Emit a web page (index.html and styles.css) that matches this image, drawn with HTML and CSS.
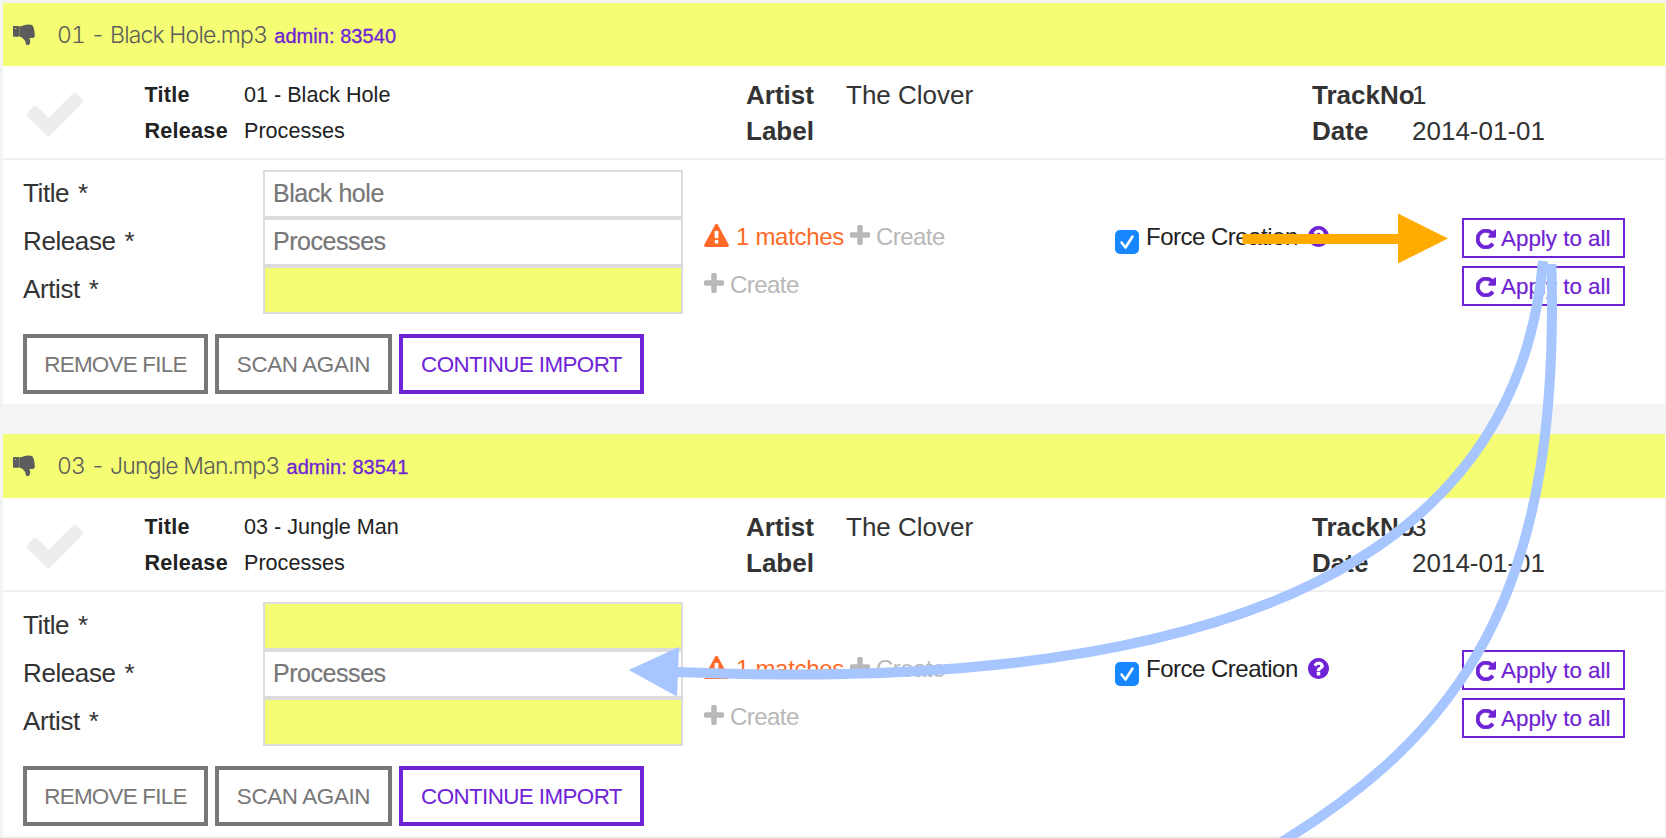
FILE: index.html
```html
<!DOCTYPE html>
<html lang="en">
<head>
<meta charset="utf-8">
<title>Import</title>
<link rel="stylesheet" href="styles.css">
</head>
<body>
<svg class="sprite" aria-hidden="true">
  <symbol id="plus" viewBox="192 128 1408 1408"><path d="M1600 736v192q0 40-28 68t-68 28h-416v416q0 40-28 68t-68 28h-192q-40 0-68-28t-28-68v-416h-416q-40 0-68-28t-28-68v-192q0-40 28-68t68-28h416v-416q0-40 28-68t68-28h192q40 0 68 28t28 68v416h416q40 0 68 28t28 68z"/></symbol>
  <symbol id="check" viewBox="121 310 1550 1212"><path d="M1671 566q0 40-28 68l-724 724-136 136q-28 28-68 28t-68-28l-136-136-362-362q-28-28-28-68t28-68l136-136q28-28 68-28t68 28l294 295 656-657q28-28 68-28t68 28l136 136q28 28 28 68z"/></symbol>
  <symbol id="help" viewBox="128 128 1536 1536"><path d="M1024 1376v-192q0-14-9-23t-23-9h-192q-14 0-23 9t-9 23v192q0 14 9 23t23 9h192q14 0 23-9t9-23zm256-672q0-88-55.500-163t-138.500-116-170-41q-243 0-371 213-15 24 8 42l132 100q7 6 19 6 16 0 25-12 53-68 86-92 34-24 86-24 48 0 85.500 26t37.500 59q0 38-20 61t-68 45q-63 28-115.500 86.500t-52.500 125.500v36q0 14 9 23t23 9h192q14 0 23-9t9-23q0-19 21.500-49.500t54.500-49.500q32-18 49-28.500t46-35 44.500-48 28-60.500 12.500-81zm384 192q0 209-103 385.500t-279.500 279.500-385.500 103-385.500-103-279.500-279.500-103-385.500 103-385.500 279.500-279.500 385.500-103 385.500 103 279.500 279.500 103 385.500z"/></symbol>
  <symbol id="warn" viewBox="0 0 1792 1664"><path d="M1024 1375v-190q0-14-9.500-23.500t-22.500-9.500h-192q-13 0-22.500 9.500t-9.500 23.500v190q0 14 9.500 23.500t22.500 9.500h192q13 0 22.500-9.500t9.500-23.500zm-2-374l18-459q0-12-10-19-13-11-24-11h-220q-11 0-24 11-10 7-10 21l17 457q0 10 10 16.500t24 6.500h185q14 0 23.500-6.500t10.500-16.500zm-14-934l768 1408q35 63-2 126-17 29-46.500 46t-63.500 17h-1536q-34 0-63.500-17t-46.500-46q-37-63-2-126l768-1408q17-31 47-49t65-18 65 18 47 49z"/></symbol>
  <symbol id="repeat" viewBox="128 128 1536 1536"><path d="M1664 256v448q0 26-19 45t-45 19h-448q-42 0-59-40-17-39 14-69l138-138q-148-137-349-137-104 0-198.500 40.500t-163.500 109.500-109.500 163.500-40.500 198.500 40.500 198.500 109.500 163.500 163.500 109.500 198.500 40.500q119 0 225-52t179-147q7-10 23-12 15 0 25 9l137 138q9 8 9.500 20.500t-7.500 22.500q-109 132-264 204.500t-327 72.500q-156 0-298-61t-245-164-164-245-61-298 61-298 164-245 245-164 298-61q147 0 284.500 55.500t244.500 156.500l130-129q29-31 70-14 39 17 39 59z"/></symbol>
  <symbol id="down" viewBox="0 0 22 22"><path fill-rule="evenodd" d="M.7 2H5.300q.7 0 .7.700V12q0 .8-.7.800H.7q-.7 0-.7-.8V2.700Q0 2 .7 2zM2.600 4a.5.500 0 1 0 .01 0z"/><path opacity=".8" d="M6 2.300h1.500v10.300H6z"/><path d="M7 2.200C9.500 2 12 .5 15.500.4c3 0 4.800.8 4.700 2.800 1 .8 1.100 2 .7 3 .9 1 1 2.100.5 3.100 1.100 2 .4 4.400-1.700 4.600h-3.300c1.300 2.600 1.200 7.200-1.900 7.200-2 0-1.500-2.300-2.400-4.100C11 15.500 9 12.800 7 12.700z"/></symbol>
</svg>

<main class="page">
  <section class="track">
    <header class="track-head first">
      <svg class="thumb"><use href="#down"/></svg>
      <span class="filename">01 - Black Hole.mp3</span>
      <a class="admin">admin: 83540</a>
    </header>
    <div class="info">
      <svg class="tick"><use href="#check"/></svg>
      <dl class="meta small"><dt>Title</dt><dd>01 - Black Hole</dd><dt>Release</dt><dd>Processes</dd></dl>
      <dl class="meta"><dt>Artist</dt><dd>The Clover</dd><dt>Label</dt><dd></dd></dl>
      <dl class="meta"><dt>TrackNo</dt><dd>1</dd><dt>Date</dt><dd>2014-01-01</dd></dl>
    </div>
    <div class="form">
      <div class="row">
        <label>Title *</label>
        <div class="field">Black hole</div>
      </div>
      <div class="row">
        <label>Release *</label>
        <div class="field">Processes</div>
        <div class="match"><span class="found"><svg class="i-warn"><use href="#warn"/></svg>1 matches</span><span class="create"><svg class="i-plus"><use href="#plus"/></svg>Create</span></div>
        <div class="force"><span class="box"><svg viewBox="0 0 24 24"><path d="M6.500 12.500l4 5L17.500 6.500"/></svg></span><span class="force-text">Force Creation</span><svg class="i-help"><use href="#help"/></svg></div>
        <button class="apply"><svg class="i-repeat"><use href="#repeat"/></svg>Apply to all</button>
      </div>
      <div class="row">
        <label>Artist *</label>
        <div class="field missing"></div>
        <div class="match"><span class="create"><svg class="i-plus"><use href="#plus"/></svg>Create</span></div>
        <div class="force"></div>
        <button class="apply"><svg class="i-repeat"><use href="#repeat"/></svg>Apply to all</button>
      </div>
      <div class="actions">
        <button class="btn remove">REMOVE FILE</button>
        <button class="btn scan">SCAN AGAIN</button>
        <button class="btn primary">CONTINUE IMPORT</button>
      </div>
    </div>
  </section>

  <section class="track">
    <header class="track-head">
      <svg class="thumb"><use href="#down"/></svg>
      <span class="filename">03 - Jungle Man.mp3</span>
      <a class="admin">admin: 83541</a>
    </header>
    <div class="info">
      <svg class="tick"><use href="#check"/></svg>
      <dl class="meta small"><dt>Title</dt><dd>03 - Jungle Man</dd><dt>Release</dt><dd>Processes</dd></dl>
      <dl class="meta"><dt>Artist</dt><dd>The Clover</dd><dt>Label</dt><dd></dd></dl>
      <dl class="meta"><dt>TrackNo</dt><dd>3</dd><dt>Date</dt><dd>2014-01-01</dd></dl>
    </div>
    <div class="form">
      <div class="row">
        <label>Title *</label>
        <div class="field missing"></div>
      </div>
      <div class="row">
        <label>Release *</label>
        <div class="field">Processes</div>
        <div class="match"><span class="found"><svg class="i-warn"><use href="#warn"/></svg>1 matches</span><span class="create"><svg class="i-plus"><use href="#plus"/></svg>Create</span></div>
        <div class="force"><span class="box"><svg viewBox="0 0 24 24"><path d="M6.500 12.500l4 5L17.500 6.500"/></svg></span><span class="force-text">Force Creation</span><svg class="i-help"><use href="#help"/></svg></div>
        <button class="apply"><svg class="i-repeat"><use href="#repeat"/></svg>Apply to all</button>
      </div>
      <div class="row">
        <label>Artist *</label>
        <div class="field missing"></div>
        <div class="match"><span class="create"><svg class="i-plus"><use href="#plus"/></svg>Create</span></div>
        <div class="force"></div>
        <button class="apply"><svg class="i-repeat"><use href="#repeat"/></svg>Apply to all</button>
      </div>
      <div class="actions">
        <button class="btn remove">REMOVE FILE</button>
        <button class="btn scan">SCAN AGAIN</button>
        <button class="btn primary">CONTINUE IMPORT</button>
      </div>
    </div>
  </section>
</main>

<svg class="arrows" viewBox="0 0 1666 838">
  <path class="curve" d="M1543 261Q1504 707 677 672"/>
  <path class="curve" d="M1551.400 264C1560 571 1478 720 1288 838L1272 848"/>
  <path class="head-blue" d="M628.700 670L679 647L677 696.500z"/>
  <path class="head-orange" d="M1242.500 234H1398V213.500L1448 238.500L1398 263.500V244H1242.500z"/>
</svg>
</body>
</html>
```
FILE: styles.css
```css
* { box-sizing: border-box; }

body {
  margin: 0;
  height: 838px;
  overflow: hidden;
  background: #f4f4f4;
  color: #333;
  font-family: "Liberation Sans", Arial, sans-serif;
}

.sprite { position: absolute; width: 0; height: 0; }
svg { fill: currentColor; flex: none; }

.page {
  display: flex;
  flex-direction: column;
  gap: 30px;
  padding: 3px 1px 0 3px;
}

.track { background: #fff; }

.track-head {
  display: flex;
  align-items: center;
  height: 64px;
  padding-left: 10px;
  background: #f4fd73;
}
.track-head.first { height: 63px; }
.thumb { width: 22px; height: 22px; margin-right: 22px; color: #5c5c5c; }
.filename {
  font: 300 23px/30px Inter, "Liberation Sans", sans-serif;
  font-variant-numeric: tabular-nums;
  letter-spacing: -0.800px;
  color: #5c5c5c;
}
.admin {
  margin: 2px 0 0 7px;
  font-size: 20px;
  line-height: 30px;
  letter-spacing: 0.050px;
  color: #6f23d6;
  -webkit-text-stroke: 0.300px #6f23d6;
}

.info {
  display: grid;
  grid-template-columns: 117px 602px 566px 1fr;
  height: 94px;
  padding: 11px 0 0 24px;
  border-bottom: 2px solid #eee;
}
.tick { width: 56px; height: 44px; margin-top: 15px; color: #ededed; }
.meta {
  display: grid;
  grid-template-columns: 99px 1fr;
  grid-template-rows: 36px 36px;
  margin: 0;
  font-size: 26px;
  line-height: 36px;
}
.meta dt { font-weight: bold; }
.meta dd { margin: 0 0 0 1px; }
.meta.small { grid-template-columns: 100px 1fr; font-size: 21.600px; color: #222; }
.meta.small dt { padding-left: 0.500px; letter-spacing: 0.250px; }
.meta.small dd { margin-left: 0; }

.form { padding: 10px 0 10px 20px; }
.row {
  display: grid;
  grid-template-columns: 240px 441px 411px 347px 163px;
  height: 48px;
}
.row label {
  font-size: 26px;
  line-height: 46px;
  letter-spacing: -0.400px;
  word-spacing: 2px;
}
.field {
  width: 420px;
  height: 48px;
  padding-left: 8px;
  border: 2px solid #dcdcdc;
  font-size: 25px;
  line-height: 43px;
  letter-spacing: -0.450px;
  color: #777;
  -webkit-text-stroke: 0.200px #777;
}
.field.missing { background: #f4fd73; }

.match, .force { display: flex; font-size: 24px; line-height: 38px; }
.match { gap: 6px; color: #b8b8b8; }
.found, .create { display: flex; }
.found { color: #ff6a28; letter-spacing: -0.300px; }
.create { letter-spacing: -0.550px; }
.i-warn { width: 25px; height: 23px; margin: 6px 7px 0 0; }
.i-plus { width: 20px; height: 20px; margin: 7px 6px 0 0; }

.force { letter-spacing: -0.500px; color: #222; }
.box {
  width: 24px;
  height: 24px;
  margin: 12px 7px 0 0;
  border-radius: 5px;
  background: #1687ff;
}
.box svg { display: block; fill: none; stroke: #fff; stroke-width: 2.600; stroke-linecap: round; stroke-linejoin: round; }
.i-help { width: 21px; height: 21px; margin: 8px 0 0 10px; color: #6f23d6; }

.apply {
  display: flex;
  align-items: center;
  height: 40px;
  padding: 1px 0 0 12px;
  border: 2px solid #6f23d6;
  background: #fff;
  font: 22.400px/36px "Liberation Sans", sans-serif;
  color: #6f23d6;
  -webkit-text-stroke: 0.200px #6f23d6;
}
.i-repeat {
  width: 20px;
  height: 20px;
  margin-right: 5px;
  overflow: visible;
  stroke: currentColor;
  stroke-width: 60;
}

.actions { display: flex; gap: 7px; margin-top: 20px; }
.btn {
  height: 60px;
  padding: 1px 0 0;
  border: 4px solid #777;
  background: #fff;
  font: 22.400px/51px "Liberation Sans", sans-serif;
  letter-spacing: -0.750px;
  color: #777;
}
.scan { width: 177px; letter-spacing: -0.350px; }
.remove { width: 185px; }
.primary { width: 245px; letter-spacing: -0.600px; border-color: #6f23d6; color: #6f23d6; }

.arrows { position: absolute; left: 0; top: 0; width: 1666px; height: 838px; }
.curve { fill: none; stroke: #a7c6ff; stroke-width: 10; }
.head-blue { fill: #a7c6ff; }
.head-orange { fill: #ffab00; }
```
